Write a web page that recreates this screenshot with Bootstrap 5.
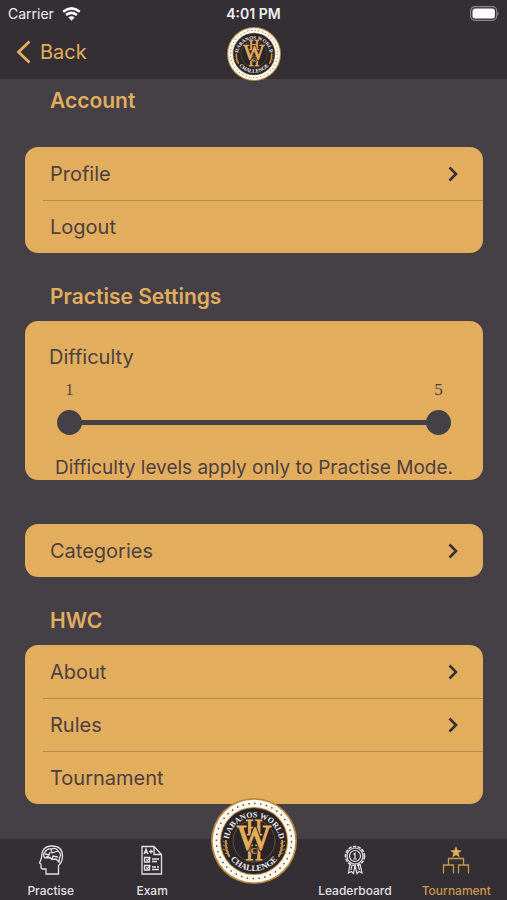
<!DOCTYPE html>
<html lang="en">
<head>
<meta charset="utf-8">
<meta name="viewport" content="width=device-width, initial-scale=1">
<title>Settings</title>
<link href="https://cdn.jsdelivr.net/npm/bootstrap@5.3.0/dist/css/bootstrap.min.css" rel="stylesheet">
<style>
:root { --gold: #e2ae5e; --plum: #453f46; --bar: #342f34; --ink: #4d4040; }
body { background: var(--plum); color: var(--ink); font-family: Inter, "Liberation Sans", sans-serif; font-size: 20px; line-height: 24px; }
.top-area { background: var(--bar); }
.status-row { height: 27px; font-size: 14px; line-height: 27px; color: #f3f1f3; }
.nav-row { height: 52px; }
.back-link { color: var(--gold); }
.brand-mark { width: 54px; height: 54px; }
.group-title { color: var(--gold); font-size: 21px; line-height: 24px; font-weight: 600; padding-left: 26px; margin: 0; }
.panel { background: var(--gold); border-radius: 13px; overflow: hidden; margin: 0 24px 0 25px; }
.gap-first { padding-top: 10px; padding-bottom: 34px; }
.gap-next { padding-top: 32px; padding-bottom: 12px; }
.setting-row { height: 53px; padding: 0 24px 0 7px; margin-left: 18px; color: var(--ink); background: none; border: 0; text-align: left; text-decoration: none; }
.setting-row + .setting-row { border-top: 1px solid #b08a52; }
.level-area { padding-top: 11px; }
.level-labels { font-family: "Liberation Serif", serif; font-size: 17px; line-height: 20px; }
.level-labels label { width: 25px; text-align: center; }
.level-slider { height: 25px; margin-top: 10px; display: grid; align-items: center; }
.level-slider > * { grid-area: 1 / 1; }
.level-line { height: 5px; margin: 0 12px; background: var(--plum); }
.level-slider input { appearance: none; width: 100%; height: 25px; margin: 0; background: none; pointer-events: none; }
.level-slider input::-webkit-slider-thumb { appearance: none; width: 25px; height: 25px; border-radius: 50%; background: var(--plum); pointer-events: auto; }
.note-line { font-size: 19px; padding-top: 21px; }
.lone-panel { padding-top: 44px; }
.tab-bar { background: var(--bar); height: 61px; }
.tab-link { color: #e3e0e3; font-size: 12px; line-height: 14px; font-weight: 500; text-decoration: none; padding-top: 6px; gap: 9px; }
.tab-link.current { color: #c9974f; }
.tab-mark { width: 86px; height: 86px; margin-top: -41px; }
</style>
</head>
<body>
<svg width="0" height="0" class="position-absolute" aria-hidden="true">
  <defs>
    <path id="arcTop" d="M-24.500 9A25.500 25.500 0 1 1 24.500 9"/>
    <path id="arcBottom" d="M-30 0A30 30 0 0 0 30 0"/>
    <symbol id="emblem" viewBox="-43 -43 86 86">
      <circle r="43" fill="#b98740"/>
      <circle r="41.3" fill="#fffaf0"/>
      <circle r="37.6" fill="none" stroke="#625039" stroke-width="1.5" stroke-dasharray="1.5 4.4"/>
      <circle r="34" fill="#b98740"/>
      <circle r="33" fill="#292529"/>
      <circle r="21" fill="none" stroke="#75592f" stroke-width=".8"/>
      <g font-family="Liberation Serif, serif" font-weight="700" text-anchor="middle">
        <g fill="#f2eeee">
          <text font-size="8"><textPath href="#arcTop" startOffset="50%">HABANOS WORLD</textPath></text>
          <text font-size="8.5"><textPath href="#arcBottom" startOffset="50%">CHALLENGE</textPath></text>
        </g>
        <g fill="#e6ae58">
          <text y="-6" font-size="23" font-weight="400" stroke="#e6ae58" stroke-width=".8">H</text>
          <text y="19" font-size="23" font-weight="400" stroke="#e6ae58" stroke-width=".8">H</text>
          <text y="9" font-size="36" font-weight="400" stroke="#292529" stroke-width="3">W</text>
          <text y="9" font-size="36" font-weight="400" stroke="#e6ae58" stroke-width="1">W</text>
          <text y="13" font-size="9" stroke="#292529" stroke-width="2" paint-order="stroke">C</text>
        </g>
      </g>
      <g fill="none" stroke="#c28f45" stroke-width="2">
        <path d="M-28 -1Q-29 7 -24.500 16M28 -1Q29 7 24.500 16"/>
        <path stroke-width="1" d="M-31 0l5 3m-5 1l5 3m-5 1l6 3m-4 1l5 2M31 0l-5 3m5 1l-5 3m5 1l-6 3m4 1l-5 2"/>
      </g>
    </symbol>
    <symbol id="chevron" viewBox="0 0 12 18"><path d="M2.500 2.500L9 9l-6.500 6.500" fill="none" stroke="#382f30" stroke-width="2.600"/></symbol>
  </defs>
</svg>

<div class="d-flex flex-column min-vh-100">
  <header class="top-area">
    <div class="status-row row g-0 px-2 align-items-center">
      <div class="col d-flex align-items-center gap-2">
        <span>Carrier</span>
        <svg width="19" height="14" viewBox="0 0 19 14" fill="none" stroke="#fff" stroke-width="2.500" aria-hidden="true"><path d="M1.200 4.800Q9.500 -2 17.800 4.800M4.100 8Q9.500 3.800 14.900 8"/><path d="M6.300 10.300Q9.500 8 12.700 10.300L9.500 13.800z" fill="#fff" stroke="none"/></svg>
      </div>
      <div class="col-auto fw-semibold">4:01 PM</div>
      <div class="col d-flex justify-content-end">
        <svg width="31" height="15" viewBox="0 0 31 15" role="img" aria-label="Battery full"><rect x="2.700" y=".7" width="26" height="13.600" rx="4" fill="none" stroke="#8b878b" stroke-width="1.200"/><rect x="4.500" y="2.500" width="22.400" height="10" rx="2.500" fill="#fff"/><path d="M29.500 5q2 2.500 0 5z" fill="#8b878b"/></svg>
      </div>
    </div>
    <nav class="nav-row row g-0 px-3 align-items-center" aria-label="Navigation">
      <div class="col">
        <a href="#" class="back-link d-inline-flex align-items-center gap-2 text-decoration-none">
          <svg width="16" height="24" viewBox="0 0 16 24" aria-hidden="true"><path d="M13.500 1.500L2.500 12l11 10.500" fill="none" stroke="currentColor" stroke-width="2.800"/></svg>
          <span>Back</span>
        </a>
      </div>
      <svg class="brand-mark col-auto" role="img" aria-label="Habanos World Challenge"><use href="#emblem"/></svg>
      <div class="col"></div>
    </nav>
  </header>

  <main class="flex-grow-1 pb-4">
    <section>
      <h2 class="group-title gap-first ms-4">Account</h2>
      <div class="panel d-flex flex-column">
        <a href="#" class="setting-row d-flex align-items-center justify-content-between">Profile <svg width="12" height="18" aria-hidden="true"><use href="#chevron"/></svg></a>
        <button type="button" class="setting-row">Logout</button>
      </div>
    </section>
    <section>
      <h2 class="group-title gap-next ms-4">Practise Settings</h2>
      <div class="panel px-4">
        <div class="pt-4">Difficulty</div>
        <div class="level-area px-2">
          <div class="level-labels d-flex justify-content-between">
            <label for="lowest">1</label><label for="highest">5</label>
          </div>
          <div class="level-slider">
            <div class="level-line"></div>
            <input type="range" id="lowest" min="1" max="5" value="1">
            <input type="range" id="highest" min="1" max="5" value="5">
          </div>
        </div>
        <div class="note-line text-center text-nowrap">Difficulty levels apply only to Practise Mode.</div>
      </div>
    </section>
    <section class="lone-panel">
      <div class="panel d-flex flex-column">
        <a href="#" class="setting-row d-flex align-items-center justify-content-between">Categories <svg width="12" height="18" aria-hidden="true"><use href="#chevron"/></svg></a>
      </div>
    </section>
    <section>
      <h2 class="group-title gap-next ms-4">HWC</h2>
      <div class="panel d-flex flex-column">
        <a href="#" class="setting-row d-flex align-items-center justify-content-between">About <svg width="12" height="18" aria-hidden="true"><use href="#chevron"/></svg></a>
        <a href="#" class="setting-row d-flex align-items-center justify-content-between">Rules <svg width="12" height="18" aria-hidden="true"><use href="#chevron"/></svg></a>
        <button type="button" class="setting-row">Tournament</button>
      </div>
    </section>
  </main>

  <nav class="tab-bar sticky-bottom row g-0" aria-label="Tabs">
    <a href="#" class="tab-link col d-flex flex-column align-items-center">
      <svg width="26" height="30" viewBox="0 0 26 30" fill="none" stroke="currentColor" stroke-width="1.300" aria-hidden="true"><path d="M8 29v-5H5q-2 0-2-2v-3l-1.500-1 2-5Q3.500 1 14 1q10.500 0 10.500 10 0 6-4 9.500V29z"/><path d="M7 13q-3-3 0-6 2-4 6-3 5-2 7 2 4 3 1.500 7L21 17l-3-3-4 .5-2-2zM7 9l4 1 1-3m1-3l1 4 3-1m-3 7l1-3 5 1m-3-5l3-1M8 12l3-1"/></svg>
      <span>Practise</span>
    </a>
    <a href="#" class="tab-link col d-flex flex-column align-items-center">
      <svg width="24" height="30" viewBox="0 0 24 30" fill="none" stroke="currentColor" stroke-width="1.300" aria-hidden="true"><path d="M2 1.500h12l7.500 8V29H2zM14 1.500v8h7.500"/><path d="M4 9l2-5 2 5M5 7.500h2.500M9 6.500h4M11 4.500v4M4.500 12.500h5v4.500h-5zM4.500 20.500h5V25h-5zM6 14.500l1.500 1 3-3M6 22.500l1.500 1 3-3M12 14h7M12 16.500h5M12 22h4m1 0h2M12 24.500h7"/></svg>
      <span>Exam</span>
    </a>
    <div class="col d-flex justify-content-center">
      <a href="#" class="flex-shrink-0" aria-label="Habanos World Challenge home"><svg class="tab-mark d-block" aria-hidden="true"><use href="#emblem"/></svg></a>
    </div>
    <a href="#" class="tab-link col d-flex flex-column align-items-center">
      <svg width="22" height="30" viewBox="0 0 22 30" fill="none" stroke="currentColor" stroke-width="1.200" aria-hidden="true"><circle cx="11" cy="11" r="9.500" stroke-width="1.600" stroke-dasharray="3.500 1.200"/><circle cx="11" cy="11" r="8"/><circle cx="11" cy="11" r="5.500"/><path d="M9.500 9.500l1.500-1.300V14m-1.700 0h3.400M6 19L4.500 28l3-1.500 2 2L11 20l2 8.500 2-2 3 1.500-2-9M8 20l-1 5M14 20l1.500 5"/></svg>
      <span>Leaderboard</span>
    </a>
    <a href="#" class="tab-link current col d-flex flex-column align-items-center" aria-current="page">
      <svg width="28" height="30" viewBox="0 0 28 30" fill="none" stroke="currentColor" stroke-width="1.300" aria-hidden="true"><path fill="#e6ad57" stroke="none" d="M14 1l1.600 4.200 4.400.2-3.500 2.700 1.200 4.300L14 10l-3.700 2.400 1.200-4.300L8 5.400l4.400-.2z"/><path d="M1.500 28.500V20h10v8.500M16.500 28.500V20h10v8.500M6.500 20v-6.500h15V20"/></svg>
      <span>Tournament</span>
    </a>
  </nav>
</div>
<script src="https://cdn.jsdelivr.net/npm/bootstrap@5.3.0/dist/js/bootstrap.bundle.min.js"></script>
</body>
</html>
